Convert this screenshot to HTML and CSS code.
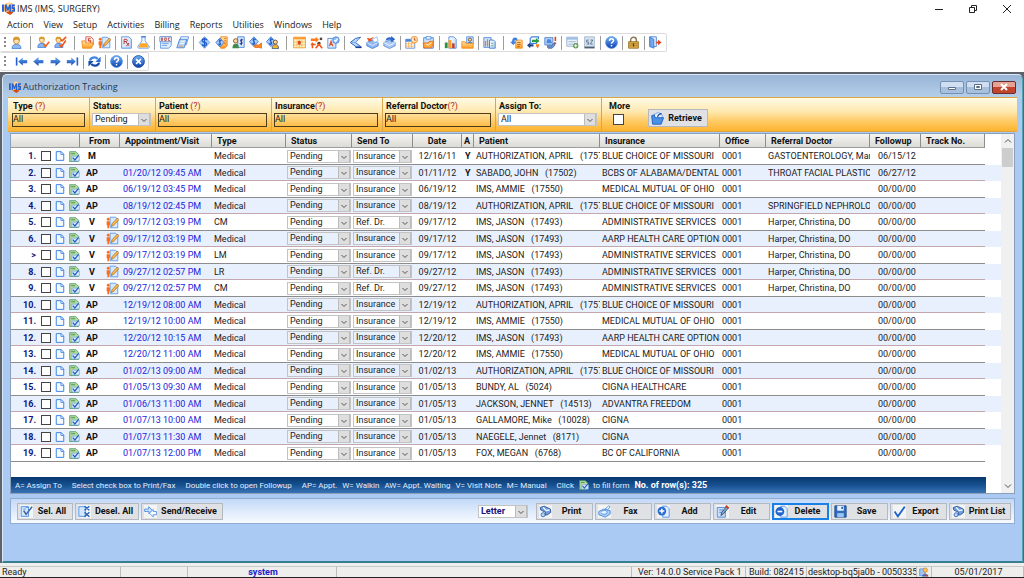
FILE: index.html
```html
<!DOCTYPE html>
<html lang="en">
<head>
<meta charset="utf-8">
<title>IMS (IMS, SURGERY)</title>
<link rel="stylesheet" href="styles.css">
</head>
<body>
<svg class="sprite" aria-hidden="true">
  <defs>
    <linearGradient id="gBlue" x1="0" y1="0" x2="0" y2="1"><stop offset="0" stop-color="#6fb0f5"/><stop offset="1" stop-color="#0d3fae"/></linearGradient>
    <linearGradient id="gPaper" x1="0" y1="0" x2="1" y2="1"><stop offset="0" stop-color="#fff"/><stop offset="1" stop-color="#b9d6f8"/></linearGradient>
    <linearGradient id="gFold" x1="0" y1="0" x2="0" y2="1"><stop offset="0" stop-color="#ffe7a8"/><stop offset="1" stop-color="#ff9a1f"/></linearGradient>
  </defs>
  <symbol id="logo" viewBox="0 0 16 16"><circle cx="9" cy="7.500" r="7" fill="#ffb066"/><circle cx="9" cy="4" r="3" fill="#ffd9a8"/><path d="M5 13l5-2 4 2-4 3z" fill="#d9480f"/><path d="M0 3h2.400v9H0zM3.600 3h2l1.700 4.500L9 3h2v9H9.200V7L8 10.500H6.600L5.400 7v5H3.600zM16 3v2h-2v1.500h2V12h-4v-2h2V8.500h-2V3z" fill="#2463d1"/></symbol>
  <symbol id="person" viewBox="0 0 16 16"><path d="M2.500 15.500c0-4 2.500-5.500 5.500-5.500s5.500 1.500 5.500 5.500z" fill="#8db8f2" stroke="#3d7ad6"/><circle cx="8" cy="6" r="3.600" fill="#ffe0b0" stroke="#c98620"/><path d="M4 6.500C3 1 6 .8 8 .8s5 .2 4 5.700C10.500 4 6 4 4 6.500z" fill="#d9982b"/></symbol>
  <symbol id="personcheck" viewBox="0 0 16 16"><path d="M1 14c0-4 2-5 5-5s5 1 5 5z" fill="#8db8f2" stroke="#3d7ad6"/><circle cx="6" cy="5" r="3" fill="#ffe0b0" stroke="#c98620"/><path d="M2.500 5C2 1 4 .8 6 .8S10 1 9.500 5C8 3 4 3 2.500 5z" fill="#d9982b"/><path d="M8 10l2.500 3L15 7" fill="none" stroke="#f0681c" stroke-width="2"/></symbol>
  <symbol id="personx" viewBox="0 0 16 16"><path d="M1 14c0-4 2-5 5-5s5 1 5 5z" fill="#8db8f2" stroke="#3d7ad6"/><circle cx="5.500" cy="5" r="3" fill="#ffe0b0" stroke="#c98620"/><path d="M2 5C1.500 1 4 .8 5.500 .8S9.500 1 9 5C7.500 3 4 3 2 5z" fill="#d9982b"/><path d="M8 4l2 2 5-5M6.500 10.500l2.500 3 5.500-8" fill="none" stroke="#f0561c" stroke-width="2"/></symbol>
  <symbol id="folder5" viewBox="0 0 16 16"><path d="M6 1h6l3 3v7H6z" fill="#fff" stroke="#d33b22"/><path d="M12 3.500H9v2.500h3v3H9" fill="none" stroke="#d33b22" stroke-width="1.300"/><path d="M1 6h4l1 2.500h9l-2 6.500H2z" fill="url(#gFold)" stroke="#ef8a17"/></symbol>
  <symbol id="note" viewBox="0 0 16 16"><path d="M5 1.500h6.500L14.500 4v10.500H5z" fill="#d9e9fd" stroke="#4e93e6"/><circle cx="2.700" cy="4" r="1.700" fill="#ff6a13"/><path d="M.8 6.500h4v5h-1V15H1.700v-3.500H.8z" fill="#ff6a13"/><path d="M6.500 13l1-3.500L14 2.500l1.800 2-6.500 7z" fill="#ffc04d" stroke="#94540f" stroke-width=".8"/></symbol>
  <symbol id="rx" viewBox="0 0 16 16"><path d="M2 1h9l3 3v11H2z" fill="url(#gPaper)" stroke="#4384de"/><path d="M5 10V4h2.500c2 0 2 2.800 0 2.800H5m2 0L11 12m0-3.500L8 12.500" fill="none" stroke="#b93a3a" stroke-width="1.200"/></symbol>
  <symbol id="flask" viewBox="0 0 16 16"><path d="M6 1h4v5l5 7c.5 1-.2 2-1.500 2h-11C1.200 15 .5 14 1 13l5-7z" fill="#eef6ff" stroke="#5c9ae6"/><path d="M4.500 9h7L14 13.200c0 1-.5 1.100-1 1.100H3c-.5 0-1-.1-1-1.100z" fill="#ffa726"/><path d="M5 1h6" stroke="#3d7ad6" stroke-width="1.500"/></symbol>
  <symbol id="doc" viewBox="0 0 16 16"><path d="M2 1h13v11l-3 3H2z" fill="#e4effd" stroke="#4d8de0"/><path d="M1 1h14v6H1z" fill="#fff" stroke="#5b86c4"/><path d="M3 2.500v3h1.500v-3zM7 2.500h2v3H7zM13.500 2.500h-2v3h2" fill="none" stroke="#b23737"/><path d="M4 9h8M4 11.500h6" stroke="#4d8de0"/></symbol>
  <symbol id="sheets" viewBox="0 0 16 16"><path d="M6 1h9.500l-3 10H3z" fill="#fff" stroke="#4384de"/><path d="M4.500 4h9L10 14.500H1z" fill="#b9d6f8" stroke="#3876d2"/><path d="M6 6.500h5M5 9h5" stroke="#fff"/><path d="M3.500 12.500h5" stroke="#ff7a1a"/></symbol>
  <symbol id="dollar" viewBox="0 0 16 16"><path d="M8 .8L14.500 8 8 15.200 1.500 8z" fill="#a9cdf8" stroke="#5b9bea"/><path d="M11.200 5C9 2.500 4.500 3.500 5.200 6s5.500 1.300 5.500 3.800-4 2.700-6 .7M8 2v12" fill="none" stroke="#1f5cc7" stroke-width="1.600"/></symbol>
  <symbol id="dollardoc" viewBox="0 0 16 16"><path d="M7 1h8v11l-3 3H7z" fill="url(#gFold)" stroke="#ee7e18"/><path d="M11 3h3M11 6h3M11 9h3" stroke="#e06a12"/><path d="M6 2.500L11 8l-5 5.500L1 8z" fill="#a9cdf8" stroke="#2f70cf"/><path d="M8 6c-2-1.800-4 0-2 2s0 3.500-2 1.800M6 4v8" fill="none" stroke="#1f5cc7" stroke-width="1.300"/></symbol>
  <symbol id="dollarperson" viewBox="0 0 16 16"><path d="M7 1h8v13H7z" fill="#dcebff" stroke="#3a78d4"/><circle cx="4.500" cy="6" r="2.700" fill="#ffd79b" stroke="#7c4a1b"/><path d="M.5 15c0-4 1.500-5.500 4-5.500s4 1.500 4 5.500z" fill="#3f8b4d"/><path d="M13.500 5c-2-1.500-4 0-2 2s0 3.500-2 2M11.500 3.500v8" fill="none" stroke="#243c8c" stroke-width="1.300"/></symbol>
  <symbol id="dollarcard" viewBox="0 0 16 16"><path d="M6 1l5.500 6L6 13 .5 7z" fill="#a9cdf8" stroke="#2f70cf"/><path d="M8.500 4.500c-2.500-2-5 0-2.500 2.500s0 4-2.500 2M6 2.500v9" fill="none" stroke="#1f5cc7" stroke-width="1.300"/><path d="M7 11h5l3.500-2.500V15l-3-1H7z" fill="#ff8b21" stroke="#e2631a"/></symbol>
  <symbol id="dollaruser" viewBox="0 0 16 16"><path d="M6 1l5.500 6L6 13 .5 7z" fill="#a9cdf8" stroke="#2f70cf"/><path d="M8.500 4.500c-2.500-2-5 0-2.500 2.500s0 4-2.500 2M6 2.500v9" fill="none" stroke="#1f5cc7" stroke-width="1.300"/><circle cx="11.500" cy="7.500" r="2.500" fill="#ffd79b" stroke="#4c3b1c"/><path d="M7.500 15.500c0-4 2-5 4-5s4 1 4 5z" fill="#f4b12c" stroke="#31537f"/></symbol>
  <symbol id="calendar" viewBox="0 0 16 16"><path d="M.8 1.500h14.500v13H.8z" fill="#fff3c9" stroke="#e8931c"/><path d="M.8 1.500h14.500V4H.8z" fill="#ff9a2c"/><path d="M1 7.500h14M1 11h14M5 4v10.500M11 4v10.500M8 4v10.500" stroke="#f0ae45" stroke-width=".8"/><path d="M6 6h3.500v4.500H6z" fill="#d9481c"/></symbol>
  <symbol id="route" viewBox="0 0 16 16"><path d="M1 3h6V1l4 3.500L7 8V6H1z" fill="#ff7a1a"/><circle cx="11" cy="9" r="2" fill="#4d3320"/><path d="M3 8v7M1 10.500h6M7 15l4-5 4 5" fill="none" stroke="#ef5a17" stroke-width="2"/><path d="M12 2h3v3h-3z" fill="#51453d"/></symbol>
  <symbol id="checkdoc" viewBox="0 0 16 16"><path d="M1 3h10v12H1z" fill="url(#gPaper)" stroke="#4384de"/><path d="M3 12.500l2-6 2 6m-3.500-2h3" fill="none" stroke="#d9481c" stroke-width="1.300"/><circle cx="11" cy="5" r="4" fill="#8fbdf6" stroke="#3a7ad8"/><path d="M9 5l1.500 2L13 3" fill="none" stroke="#fff" stroke-width="1.500"/></symbol>
  <symbol id="scanner" viewBox="0 0 16 16"><path d="M14.500 1.500L8 3 1.500 8 9 13.500h6L8 8z" fill="#b9d6f8" stroke="#2d66c4" stroke-width="1.200"/><path d="M3 8h5l6-6" fill="none" stroke="#6fa5ea"/><path d="M8 14h7.500" stroke="#173f92" stroke-width="1.800"/></symbol>
  <symbol id="inbox" viewBox="0 0 16 16"><path d="M1 8l7-3 7 3v4l-7 3.500L1 12z" fill="#8db8f2" stroke="#3f78cf"/><path d="M1 8l7 3.500L15 8" fill="none" stroke="#e9f3ff"/><path d="M8 4l5.500-3L15 6l-5 2z" fill="#fff" stroke="#8db8f2"/><path d="M1 2l2 4h5L6.500 4.800 10 1 5 3z" fill="#f0561c"/></symbol>
  <symbol id="outbox" viewBox="0 0 16 16"><path d="M1 8l7-3 7 3v4l-7 3.500L1 12z" fill="#a9c9f5" stroke="#5b88cf"/><path d="M1 8l7 3.500L15 8" fill="none" stroke="#fff"/><path d="M3 6c1-4 4-5 7-4V0l5 4-5 4V5c-3-1-5 0-7 1z" fill="#2a65cd"/></symbol>
  <symbol id="calclock" viewBox="0 0 16 16"><path d="M1 4h11v11H1z" fill="#fff" stroke="#4384de"/><path d="M1 4h11v3H1z" fill="#4384de"/><path d="M1 9.500h11M1 12.500h11M4.500 7v8M8 7v8" stroke="#ffac42"/><circle cx="11.500" cy="4.500" r="4" fill="#ffe5b7" stroke="#f0821c"/><path d="M11.500 2v3H14" fill="none" stroke="#a84a12"/></symbol>
  <symbol id="clip" viewBox="0 0 16 16"><path d="M2 2h12v13H2z" fill="#c9dffb" stroke="#4384de"/><path d="M5 .8h6v3H5z" fill="#fff" stroke="#4384de"/><path d="M1.500 8.500h6l1.500-2h5.500l-2.500 8H2.500z" fill="#ffa938" stroke="#ea661b"/><path d="M5 10l3 1 4-3" fill="none" stroke="#fff"/></symbol>
  <symbol id="chart" viewBox="0 0 16 16"><path d="M6 1h6l3 3v11H6z" fill="url(#gPaper)" stroke="#4384de"/><path d="M1 8h3.500v7H1z" fill="#2b9142"/><path d="M5.500 5H9v10H5.500z" fill="#ff9c28"/><path d="M10 9h3v6h-3z" fill="#c43c24"/></symbol>
  <symbol id="folderuser" viewBox="0 0 16 16"><path d="M7 1h8v9H7z" fill="#dcebff" stroke="#4384de"/><circle cx="11" cy="4.500" r="2" fill="#ffd79b" stroke="#5b3c20"/><path d="M7.500 10c0-4 7-4 7 0z" fill="#3d7ad6"/><path d="M1 7h4l1 2h9v6H1z" fill="url(#gFold)" stroke="#ef8a17"/></symbol>
  <symbol id="chartdoc" viewBox="0 0 16 16"><path d="M1 2h9v12H1z" fill="#d2e4fb" stroke="#4384de"/><path d="M3 6v7M5.500 4v9M8 8v5" stroke="#e2812a" stroke-width="1.500"/><path d="M8 5h5l2 2v8H8z" fill="url(#gPaper)" stroke="#2f70cf"/><path d="M10 9h3M10 12h3" stroke="#59a35e"/></symbol>
  <symbol id="docback" viewBox="0 0 16 16"><path d="M7 5h8v10H7z" fill="url(#gFold)" stroke="#ef8a17"/><path d="M9 8h4M9 10.500h4M9 13h3" stroke="#b54c12"/><path d="M9 3C5 0 2.500 3 2.500 7H0l4 4 4-4H5.500c0-2 1-3 3.500-1z" fill="#3e80e2"/></symbol>
  <symbol id="sync" viewBox="0 0 16 16"><path d="M4 9V3l2-2h8v3M4 9h8" fill="none" stroke="#4384de" stroke-width="1.500"/><path d="M6 4.500h5V2.500L15.500 6 11 9.500v-2H6z" fill="#2f9a43"/><path d="M8 10H4V8L0 11.500 4 15v-2h4z" fill="#1d3f8a"/><path d="M11 10h4v2l-2 3.500L11 12z" fill="#ff7a1a"/></symbol>
  <symbol id="monitor" viewBox="0 0 16 16"><path d="M1 2h10v9H1z" fill="#b8d3f6" stroke="#3f78cf"/><path d="M4 4h4l2 5H3z" fill="#4a87de"/><path d="M4 12h5l4-4v4l-3 3H5z" fill="#6d94cf" stroke="#3f66a3"/><path d="M14 1v5M14 8v2" stroke="#d9481c" stroke-width="2"/></symbol>
  <symbol id="listadd" viewBox="0 0 16 16"><path d="M1 1.500h13v11H1z" fill="#eaf3fc" stroke="#8aa4bf"/><path d="M1 1.500h13v3H1z" fill="#9fc0e6"/><path d="M3 7h9M3 10h6" stroke="#91abc4"/><circle cx="12" cy="12" r="3.300" fill="#5b9a54"/><path d="M10 12h4M12 10v4" stroke="#fff" stroke-width="1.200"/></symbol>
  <symbol id="sz" viewBox="0 0 16 16"><path d="M2 1h12v14H2z" fill="#d6e3f0" stroke="#9fb2c5"/><path d="M7 5H4.500v2.500H7V10H4.500M9 5h3l-3 5h3" fill="none" stroke="#506781"/><path d="M2 13h12v2H2z" fill="#51606f"/></symbol>
  <symbol id="help" viewBox="0 0 16 16"><circle cx="8" cy="8" r="7.300" fill="url(#gBlue)" stroke="#5d9be8"/><path d="M5.500 6c0-3.500 5-3.500 5-.5 0 2-2.500 2-2.500 4M8 11v2" fill="none" stroke="#fff" stroke-width="1.800"/></symbol>
  <symbol id="lock" viewBox="0 0 16 16"><path d="M4.500 8V5c0-4.500 7-4.500 7 0v3" fill="none" stroke="#8a7a52" stroke-width="1.800"/><path d="M2 7h12v8H2z" fill="#e0b04a" stroke="#8d681e"/><path d="M3 9.500h10M3 12h10" stroke="#a67c24"/><path d="M8 9v4" stroke="#5d4313" stroke-width="1.500"/></symbol>
  <symbol id="exit" viewBox="0 0 16 16"><path d="M1 1h8v12H1z" fill="#eef5ff" stroke="#3876d2"/><path d="M1 1l5 3v11l-5-2z" fill="#74a8ee" stroke="#3876d2"/><path d="M8.500 7H11V4.500L15.500 8 11 11.500V9H8.500z" fill="#e8451c"/></symbol>
  <symbol id="first" viewBox="0 0 16 16"><path d="M2 3v10" stroke="#2560cf" stroke-width="2"/><path d="M4 8l5.500-5v3H15v4H9.500v3z" fill="url(#gBlue)"/></symbol>
  <symbol id="prev" viewBox="0 0 16 16"><path d="M1.500 8L8 2.500V6h6v4H8v3.500z" fill="url(#gBlue)"/></symbol>
  <symbol id="next" viewBox="0 0 16 16"><path d="M14.500 8L8 2.500V6H2v4h6v3.500z" fill="url(#gBlue)"/></symbol>
  <symbol id="last" viewBox="0 0 16 16"><path d="M14 3v10" stroke="#2560cf" stroke-width="2"/><path d="M12 8L6.500 3v3H1v4h5.500v3z" fill="url(#gBlue)"/></symbol>
  <symbol id="refresh" viewBox="0 0 16 16"><path d="M2.500 7C3 3 9 1.500 12 5" fill="none" stroke="#3f86e4" stroke-width="2.800"/><path d="M15.500 2v6.500H9z" fill="#2a6fd6"/><path d="M13.500 9.500C13 13.500 7 14.500 4 11" fill="none" stroke="#164aa8" stroke-width="2.800"/><path d="M.5 14V7.500H7z" fill="#164aa8"/></symbol>
  <symbol id="closeball" viewBox="0 0 16 16"><circle cx="8" cy="8" r="7.300" fill="url(#gBlue)" stroke="#174a9c"/><path d="M5 5l6 6M11 5l-6 6" stroke="#fff" stroke-width="2"/></symbol>
  <symbol id="page" viewBox="0 0 16 16"><path d="M2 1h8l4 4v10H2z" fill="#f5faff" stroke="#3f86e4" stroke-width="1.600"/><path d="M9.500 1v4.500H14" fill="none" stroke="#3f86e4" stroke-width="1.400"/></symbol>
  <symbol id="form" viewBox="0 0 16 16"><path d="M1 1h9l4 4v10.300H1z" fill="#b5dba0" stroke="#4f9868" stroke-width="1.200"/><path d="M3 4h6" stroke="#428a4c" stroke-width="1.300"/><path d="M4 7.500h11v7H4z" fill="#dceafe" stroke="#79a7da"/><path d="M5.500 9.500L8.500 13l5.500-6.500" fill="none" stroke="#1e5fc2" stroke-width="1.800"/></symbol>
  <symbol id="open" viewBox="0 0 16 16"><path d="M4 3l5-2.500L14 4l-1 5H5z" fill="#eaf3ff" stroke="#5b9bea"/><path d="M.8 4.500L4 3.500 5 7h10.500l-3 8H2z" fill="#4892ea" stroke="#1d58b8"/><path d="M8 6c1-3 3-4 5-4" fill="none" stroke="#174aa2" stroke-width="1.400"/></symbol>
  <symbol id="selall" viewBox="0 0 16 16"><path d="M1.500 2h9v12h-9z" fill="#d5e7fc" stroke="#3f86e4"/><path d="M4.500 7l3 4.500L15 2" fill="none" stroke="#3b5f8e" stroke-width="1.800"/><path d="M7 3h3M4 5h3M9 9l3-2" stroke="#3f86e4"/></symbol>
  <symbol id="deselall" viewBox="0 0 16 16"><path d="M1 2h8v12H1z" fill="#d5e7fc" stroke="#3f86e4"/><path d="M8 1.500l6 5M14 1.500l-6 5M8 9l6 5.500M14 9l-6 5.500" stroke="#2362b5" stroke-width="1.700"/></symbol>
  <symbol id="swap" viewBox="0 0 16 16"><path d="M.8 5h5V2l4.500 4.500L6 11V8H.8z" fill="#cfe3fb" stroke="#3f86e4"/><path d="M15.300 8h-4V5.500L6.500 10l4.800 4.500V12h4z" fill="#fff" stroke="#3f86e4"/></symbol>
  <symbol id="print" viewBox="0 0 16 16"><path d="M1.500 3l5-1.500L14 5l.5 4-4 3-3 .5L8 9 2 6z" fill="#6fa0e2" stroke="#23488c"/><path d="M5 3l4 4 4-1" fill="none" stroke="#fff" stroke-width="1.500"/><circle cx="5" cy="12" r="2.500" fill="#b9d6f8" stroke="#2e5fae"/></symbol>
  <symbol id="fax" viewBox="0 0 16 16"><path d="M1 8l6-3 8 2v4l-6 4-8-3z" fill="#a9cdf7" stroke="#4384de"/><path d="M4 8c3-2 7-2 7 1s-5 3-7 1" fill="#e9f4ff" stroke="#4384de"/><path d="M9 5l4-4 2 1-3 4z" fill="#fff" stroke="#4384de"/></symbol>
  <symbol id="add" viewBox="0 0 16 16"><path d="M7 1.500h5l3 3V15H7z" fill="#e4f0ff" stroke="#3f86e4"/><circle cx="6" cy="7.500" r="5.300" fill="#2a6bd0"/><path d="M3 7.500h6M6 4.500v6" stroke="#fff" stroke-width="1.800"/></symbol>
  <symbol id="edit" viewBox="0 0 16 16"><path d="M1.500 3h10v12h-10z" fill="#c9dffb" stroke="#3f78cf"/><path d="M4 6h5M4 9h4" stroke="#3f78cf"/><path d="M6 13l1-4 6-7 2 2-6 7z" fill="#7fa5c7" stroke="#2c4666"/><path d="M12 1l3.500 3" stroke="#cf3e22" stroke-width="2.500"/></symbol>
  <symbol id="delete" viewBox="0 0 16 16"><path d="M7 1.500h5l3 3V15H7z" fill="#e4f0ff" stroke="#3f86e4"/><circle cx="6" cy="8" r="5.400" fill="#1f63cd"/><path d="M3 8h6" stroke="#fff" stroke-width="2"/></symbol>
  <symbol id="save" viewBox="0 0 16 16"><path d="M1 1h14v14H1z" fill="#2f6cc0" stroke="#163d7d"/><path d="M4 1h8v6H4z" fill="#e8f2ff"/><path d="M4 10h8v5H4z" fill="#9cc4f2"/><path d="M9 2h2v3H9z" fill="#245cae"/></symbol>
  <symbol id="export" viewBox="0 0 16 16"><path d="M2 8l4 6L14.500 2" fill="none" stroke="#1d62c9" stroke-width="2.200"/></symbol>
  <symbol id="dbuser" viewBox="0 0 16 16"><path d="M1 3h9v11H1z" fill="#9cc4f2" stroke="#4384de"/><circle cx="10" cy="5" r="3.500" fill="#ffc25b" stroke="#c0771b"/><path d="M5 15c0-5 10-5 10 0z" fill="#2a6bd0"/><path d="M9 11l4 4" stroke="#e8451c" stroke-width="2"/></symbol>
</svg>

<header class="titlebar">
  <svg class="app-logo"><use href="#logo"/></svg>
  <h1 class="app-name">IMS (IMS, SURGERY)</h1>
  <div class="win-controls">
    <button type="button" class="win-btn" aria-label="Minimize"><svg viewBox="0 0 10 10"><path d="M1 5.500h8"/></svg></button>
    <button type="button" class="win-btn" aria-label="Restore"><svg viewBox="0 0 10 10"><path d="M1.500 3.500h5v5h-5zM3.500 3.500v-2h5v5h-2"/></svg></button>
    <button type="button" class="win-btn" aria-label="Close"><svg viewBox="0 0 10 10"><path d="M1 1l8 8M9 1L1 9"/></svg></button>
  </div>
</header>

<nav class="menu" aria-label="Main menu">
  <button type="button">Action</button><button type="button">View</button><button type="button">Setup</button><button type="button">Activities</button><button type="button">Billing</button><button type="button">Reports</button><button type="button">Utilities</button><button type="button">Windows</button><button type="button">Help</button>
</nav>

<div class="toolbar toolbar-main" id="mainTools" role="toolbar" aria-label="Modules"></div>
<div class="toolbar toolbar-nav" id="navTools" role="toolbar" aria-label="Navigation"></div>

<main class="mdi">
  <section class="child" aria-labelledby="childTitle">
    <div class="child-title">
      <svg class="child-logo"><use href="#logo"/></svg>
      <h2 id="childTitle">Authorization Tracking</h2>
      <div class="child-controls">
        <button type="button" class="child-btn" aria-label="Minimize window"><svg viewBox="0 0 12 8"><path d="M2.500 4.500h7v2h-7z"/></svg></button>
        <button type="button" class="child-btn" aria-label="Maximize window"><svg viewBox="0 0 12 8"><path d="M2.500 1.500h7v5h-7zM4.500 3.500h3v1h-3z"/></svg></button>
        <button type="button" class="child-btn child-btn-close" aria-label="Close window"><svg viewBox="0 0 12 8"><path d="M3 1l6 6M9 1L3 7"/></svg></button>
      </div>
    </div>

    <form class="filters">
      <div class="filter f-type"><label for="fType">Type <span class="hint">(?)</span></label><input id="fType" class="lookup" value="All"></div>
      <div class="filter f-status"><label for="fStatus">Status:</label><select id="fStatus" class="combo"><option>Pending</option></select></div>
      <div class="filter f-patient"><label for="fPatient">Patient <span class="hint">(?)</span></label><input id="fPatient" class="lookup" value="All"></div>
      <div class="filter f-insurance"><label for="fIns">Insurance<span class="hint">(?)</span></label><input id="fIns" class="lookup" value="All"></div>
      <div class="filter f-doctor"><label for="fDoc">Referral Doctor<span class="hint">(?)</span></label><input id="fDoc" class="lookup" value="All"></div>
      <div class="filter f-assign"><label for="fAssign">Assign To:</label><select id="fAssign" class="combo"><option>All</option></select></div>
      <div class="filter f-more"><label for="fMore">More</label><input id="fMore" class="tick" type="checkbox"></div>
      <button type="button" class="btn btn-retrieve"><svg class="icon"><use href="#open"/></svg><span>Retrieve</span></button>
    </form>

    <div class="grid-panel">
      <div class="grid-main">
        <table class="grid">
          <colgroup><col class="c-lead"><col class="c-from"><col class="c-appt"><col class="c-type"><col class="c-status"><col class="c-send"><col class="c-date"><col class="c-a"><col class="c-patient"><col class="c-ins"><col class="c-office"><col class="c-doc"><col class="c-follow"><col class="c-track"><col></colgroup>
          <thead><tr><th></th><th class="mid">From</th><th>Appointment/Visit</th><th>Type</th><th>Status</th><th>Send To</th><th class="mid">Date</th><th class="tight">A</th><th>Patient</th><th>Insurance</th><th>Office</th><th>Referral Doctor</th><th>Followup</th><th>Track No.</th><td class="rest"></td></tr></thead>
          <tbody id="rows"></tbody>
        </table>
        <p class="legend"><span class="g1">A= Assign To</span><span class="g2">Select check box to Print/Fax</span><span class="g2">Double click to open Followup</span><span class="g3">AP= Appt.</span><span class="g3">W= Walkin</span><span class="g3">AW= Appt. Waiting</span><span class="g3">V= Visit Note</span><span class="g2">M= Manual</span><span class="g3">Click</span><svg class="legend-icon"><use href="#form"/></svg><span class="g3">to fill form</span><strong>No. of row(s): 325</strong></p>
      </div>
      <div class="scroll" aria-hidden="true"><svg class="arrow" viewBox="0 0 8 8"><path d="M1 5.500L4 2.500l3 3"/></svg><span class="thumb"></span><svg class="arrow arrow-down" viewBox="0 0 8 8"><path d="M1 2.500l3 3 3-3"/></svg></div>
    </div>

    <div class="actions">
      <button type="button" class="btn w-sel"><svg class="icon"><use href="#selall"/></svg><span>Sel. All</span></button>
      <button type="button" class="btn w-desel"><svg class="icon"><use href="#deselall"/></svg><span>Desel. All</span></button>
      <button type="button" class="btn w-send"><svg class="icon"><use href="#swap"/></svg><span>Send/Receive</span></button>
      <select class="combo paper" aria-label="Paper size"><option>Letter</option></select>
      <button type="button" class="btn"><svg class="icon"><use href="#print"/></svg><span>Print</span></button>
      <button type="button" class="btn"><svg class="icon"><use href="#fax"/></svg><span>Fax</span></button>
      <button type="button" class="btn"><svg class="icon"><use href="#add"/></svg><span>Add</span></button>
      <button type="button" class="btn"><svg class="icon"><use href="#edit"/></svg><span>Edit</span></button>
      <button type="button" class="btn btn-focus"><svg class="icon"><use href="#delete"/></svg><span>Delete</span></button>
      <button type="button" class="btn"><svg class="icon"><use href="#save"/></svg><span>Save</span></button>
      <button type="button" class="btn"><svg class="icon"><use href="#export"/></svg><span>Export</span></button>
      <button type="button" class="btn w-list"><svg class="icon"><use href="#print"/></svg><span>Print List</span></button>
    </div>
  </section>
</main>

<footer class="status">
  <span class="s-ready">Ready</span><span class="s-gap"></span><span class="s-user">system</span><span class="s-fill"></span><span class="s-ver">Ver: 14.0.0 Service Pack 1</span><span class="s-build">Build: 082415</span><span class="s-host">desktop-bq5ja0b - 0050335</span><span class="s-icon"><svg><use href="#dbuser"/></svg></span><span class="s-date">05/01/2017</span>
</footer>
<script src="app.js"></script>
</body>
</html>
```
FILE: styles.css
```css
* { box-sizing: border-box; }

body {
  margin: 0;
  height: 100vh;
  display: flex;
  flex-direction: column;
  overflow: hidden;
  background: #fff;
  color: #222;
  font-family: Roboto, "Liberation Sans", sans-serif;
  font-size: 9px;
}

button, input, select { font: inherit; color: inherit; margin: 0; }
h1, h2, p { margin: 0; font-weight: normal; }
.sprite { position: absolute; width: 0; height: 0; }

/* Application title and menu */
.titlebar { display: flex; align-items: center; height: 17px; padding-left: 2px; flex: none; }
.app-logo { width: 13px; height: 13px; }
.app-name { margin-left: 2px; font: 9px/12px "Open Sans", "Noto Sans", sans-serif; }
.win-controls { display: flex; margin-left: auto; }
.win-btn { width: 34px; height: 16px; padding: 0; border: 0; background: none; display: grid; place-items: center; }
.win-btn svg { width: 10px; height: 10px; fill: none; stroke: #222; }
.menu { display: flex; gap: 10px; padding-left: 7px; height: 16px; flex: none; }
.menu button { padding: 0; border: 0; background: none; font: 9px/14px "Open Sans", "Noto Sans", sans-serif; }

/* Toolbars */
.toolbar { display: flex; align-items: center; gap: 4px; flex: none; align-self: flex-start; height: 19px; padding: 0 4px 0 4px; border: 1px solid #dcdcdc; border-left: 0; border-radius: 2px; background: #fff; }
.toolbar-nav { margin-bottom: 1px; padding-right: 3px; }
.grip { width: 2px; height: 12px; background: repeating-linear-gradient(#8a8a8a 0 2px, transparent 2px 4px); }
.toolbar-nav .grip { margin-right: 5px; }
.tool { width: 13px; height: 13px; padding: 0; border: 0; background: none; display: block; }
.tool svg { width: 13px; height: 13px; display: block; }
.sep { width: 1px; height: 14px; background: #9d9d9d; }
.sep-wide { margin: 0 2px 0 3px; }

/* Child window */
.mdi { flex: 1; min-height: 0; display: flex; padding: 2px 1px 0 2px; background: #5e636b; }
.child {
  flex: 1; min-width: 0; display: flex; flex-direction: column;
  padding: 0 8px; border-radius: 5px 5px 0 0;
  background: linear-gradient(#99b5d7, #b4cee9 22px, #abcaf3 24px);
  border: 1px solid #d8e8f8; border-right-color: #4fa3b2; border-bottom: 2px solid #367f91;
}
.child-title { display: flex; align-items: center; height: 22px; padding-top: 2px; flex: none; }
.child-logo { width: 12px; height: 12px; margin-left: -2px; }
.child-title h2 { margin-left: 2px; font: 9px/12px "Open Sans", "Noto Sans", sans-serif; color: #26364b; }
.child-controls { display: flex; gap: 2px; margin: 0 -2px 0 auto; }
.child-btn { width: 24px; height: 13px; padding: 0; border: 1px solid #7690b2; border-radius: 2px; background: linear-gradient(#cfdef0 50%, #a7c0de 50%); display: grid; place-items: center; }
.child-btn svg { width: 12px; height: 8px; fill: #fff; stroke: #5d6e84; }
.child-btn-close { border-color: #6b2d2b; background: linear-gradient(#e5a393 50%, #c1442d 50%); }
.child-btn-close svg { stroke: #fff; stroke-width: 2; }

/* Filters */
.filters { display: flex; flex: none; height: 35px; margin: 0 -3px; border: 1px solid #dca541; border-width: 1px 0; background: linear-gradient(#fffbe6, #ffe9b0 40%, #ffcb66 70%, #fdb32f); }
.filter { display: flex; flex-direction: column; padding: 1px 4px 0 2px; border-right: 1px solid #d9a650; }
.filter label { font: bold 9px/14px Roboto, sans-serif; color: #111; padding-left: 1px; white-space: nowrap; }
.hint { color: #b52b1b; font-weight: normal; }
.f-type { width: 82px; padding-left: 4px; }
.f-status { width: 66px; }
.f-patient { width: 116px; }
.f-insurance { width: 111px; }
.f-doctor { width: 113px; }
.f-assign { width: 106px; }
.f-more { width: 42px; border: 0; padding-left: 6px; }
.lookup { width: 100%; height: 14px; padding: 0 0 2px; border: 1px solid #4b3c1b; border-radius: 0; background: linear-gradient(#ffdf9a, #fdbc48); outline: none; }
.combo, .cell-combo {
  appearance: none; width: 100%; height: 13px; padding: 0 15px 0 2px; border: 1px solid #c3c3c3; border-radius: 0; outline: none;
  background: #fff url("data:image/svg+xml,%3Csvg xmlns='http://www.w3.org/2000/svg' width='12' height='11'%3E%3Cpath d='M0 0h12v11H0z' fill='%23dedede'/%3E%3Cpath d='M.5 0v11M11.5 0v11' stroke='%23bcbcbc'/%3E%3Cpath d='M3.500 5l2.500 2.500L8.500 5' fill='none' stroke='%23555'/%3E%3C/svg%3E") no-repeat right center;
  line-height: 11px;
}
.tick { appearance: none; width: 10px; height: 10px; border: 1px solid #444; background: #fff; display: block; }
.f-more .tick { width: 11px; height: 11px; margin: 1px 0 0 5px; }

/* Push buttons */
.btn { display: flex; align-items: center; width: 57px; height: 17px; padding: 0 1px 0 2px; border: 1px solid #b4b9c0; background: #dfe1e5; font: bold 9px/13px Roboto, sans-serif; color: #111; white-space: nowrap; }
.btn span { flex: 1; text-align: center; }
.icon { width: 13px; height: 13px; flex: none; background: #f3f5f4; }
.btn-retrieve { width: 60px; height: 18px; margin: 11px 0 0 4px; }
.btn-retrieve .icon { background: none; }
.btn-focus { border: 2px solid #1a80e5; padding: 0 0 0 1px; }

/* Grid */
.grid-panel { flex: none; display: flex; margin: 1px -1px 0; border: 1px solid #8a9fb9; background: #fff; }
.grid-main { flex: 1; min-width: 0; display: flex; flex-direction: column; }
.grid { width: 100%; table-layout: fixed; border-collapse: separate; border-spacing: 0; }
.c-lead { width: 69px; } .c-from { width: 40px; } .c-appt { width: 92px; } .c-type { width: 74px; }
.c-status { width: 66px; } .c-send { width: 61px; } .c-date { width: 49px; } .c-a { width: 12px; }
.c-patient { width: 126px; } .c-ins { width: 120px; } .c-office { width: 46px; } .c-doc { width: 104px; }
.c-follow { width: 51px; } .c-track { width: 64px; }
.grid th { height: 14px; padding: 0 0 0 5px; text-align: left; font: bold 9px/12px Roboto, sans-serif; color: #111; white-space: nowrap; overflow: hidden; background: linear-gradient(#f4f4f1, #dcdbd6); border-right: 1px solid #8d8d8d; border-bottom: 1px solid #9d9d9d; }
.grid th.mid { text-align: center; padding: 0; }
.grid th.tight { padding-left: 2px; }
.grid tbody td { padding: 0 0 0 2px; border-bottom: 1px solid #c3a6ae; white-space: nowrap; overflow: hidden; line-height: 14px; vertical-align: middle; }
.grid tbody tr { height: 16px; }
.grid tbody tr:nth-child(odd) { height: 17px; }
.grid tbody tr:nth-child(odd) td { border-bottom-color: #8c8c8c; }
.grid tbody tr:nth-child(even) { background: #e8f0fe; }
.grid tbody tr td.rest { border-bottom: 0; }
.lead { display: flex; align-items: center; gap: 4px; }
.lead .num { width: 24px; text-align: right; font: bold 9px/14px Roboto, sans-serif; color: #14147c; }
.lead .tick { flex: none; margin-left: 1px; }
.lead svg { width: 10px; height: 12px; flex: none; }
.lead .form-icon { width: 11px; height: 13px; }
.from { display: flex; align-items: center; justify-content: space-between; font: bold 9px/14px Roboto, sans-serif; color: #111; }
.from span { width: 20px; text-align: center; }
.from svg { width: 13px; height: 13px; margin-right: 1px; }
.grid .appt { color: #2222d8; padding-left: 3px; }
.grid .date { text-align: center; padding: 0; }
.grid .flag { font-weight: bold; color: #111; padding-left: 3px; }
.grid .pad { padding-left: 8px; }
.grid td.combo-cell { padding: 0 1px; }
.cell-combo { display: block; background-color: transparent; padding-right: 12px; height: 13px; }
.legend { display: flex; align-items: center; height: 16px; margin: 15px 15px 0 0; padding-left: 4px; white-space: pre; font: 8px/15px Roboto, sans-serif; color: #e4eefb; background: linear-gradient(#07386f, #16508f 50%, #3b73b5); }
.g1, .g2 { margin-right: 10px; }
.g3 { margin-right: 5px; }
.legend-icon { width: 10px; height: 10px; margin-right: 4px; }
.legend strong { color: #fff; font-size: 9px; }
.scroll { width: 13px; display: flex; flex-direction: column; align-items: center; background: #f0f0f0; }
.arrow { width: 8px; height: 14px; fill: none; stroke: #505050; flex: none; }
.arrow-down { margin-top: auto; }
.thumb { width: 11px; height: 19px; background: #cdcdcd; }

/* Action bar */
.actions { display: flex; align-items: center; gap: 2px; flex: none; height: 26px; margin: 4px -1px 0; padding: 0 3px 0 6px; border: 1px solid #8fadd3; background: linear-gradient(#c3d9f7, #f8fbff); }
.w-sel { width: 56px; } .w-desel { width: 64px; } .w-send { width: 82px; } .w-list { width: 62px; }
.paper { width: 50px; margin: 0 6px 0 auto; font: bold 9px/11px Roboto, sans-serif; color: #14147c; }

/* Status bar */
.status { display: flex; flex: none; height: 15px; padding-top: 3px; background: #eeeeec; border-bottom: 1px solid #222; font: 9px/10px Roboto, sans-serif; }
.status span { border-right: 1px solid #bdbdbd; border-top: 1px solid #c9c9c9; padding-left: 2px; white-space: nowrap; overflow: hidden; }
.status .s-ready { width: 121px; } .status .s-gap { width: 67px; }
.status .s-user { width: 149px; text-align: center; font-weight: bold; color: #2020cc; }
.status .s-fill { flex: 1; }
.status .s-ver { width: 114px; padding-left: 6px; } .status .s-build { width: 61px; padding-left: 3px; }
.status .s-host { width: 110px; padding-left: 1px; } .status .s-icon { width: 15px; padding-left: 1px; }
.s-icon svg { width: 12px; height: 10px; display: block; }
.status .s-date { width: 92px; text-align: center; }
```
FILE: app.js
```js
// Toolbar layout: "|" is a separator, "||" a separator with extra room.
const MAIN = "person || personcheck personx || folder5 note | rx flask | doc sheets | dollar dollardoc dollarperson dollarcard dollaruser || calendar route checkdoc | scanner inbox outbox | calclock clip | chart folderuser | chartdoc || docback sync monitor | listadd sz | help | lock | exit";
const NAV = "first prev next last | refresh | help | closeball";

function fillToolbar(id, spec) {
  const items = spec.split(" ").map(s => {
    if (s === "|") return '<span class="sep"></span>';
    if (s === "||") return '<span class="sep sep-wide"></span>';
    return `<button type="button" class="tool" aria-label="${s}"><svg><use href="#${s}"/></svg></button>`;
  });
  document.getElementById(id).innerHTML = '<span class="grip"></span>' + items.join("");
}
fillToolbar("mainTools", MAIN);
fillToolbar("navTools", NAV);

// number, from, appointment, type, send to, date, A, patient, insurance, referral doctor, followup
const BLUE = "BLUE CHOICE OF MISSOURI", MUT = "MEDICAL MUTUAL OF OHIO", ADM = "ADMINISTRATIVE SERVICES", AARP = "AARP HEALTH CARE OPTIONS";
const APRIL = "AUTHORIZATION, APRIL   (1757", AMMIE = "IMS, AMMIE   (17550)", JASON = "IMS, JASON   (17493)", HARPER = "Harper, Christina, DO";
const ROWS = [
  ["1.", "M", "", "Medical", "Insurance", "12/16/11", "Y", APRIL, BLUE, "GASTOENTEROLOGY, Mar", "06/15/12"],
  ["2.", "AP", "01/20/12 09:45 AM", "Medical", "Insurance", "01/11/12", "Y", "SABADO, JOHN   (17502)", "BCBS OF ALABAMA/DENTAL", "THROAT FACIAL PLASTIC", "06/27/12"],
  ["3.", "AP", "06/19/12 03:45 PM", "Medical", "Insurance", "06/19/12", "", AMMIE, MUT, "", ""],
  ["4.", "AP", "08/19/12 02:45 PM", "Medical", "Insurance", "08/19/12", "", APRIL, BLUE, "SPRINGFIELD NEPHROLO", ""],
  ["5.", "V", "09/17/12 03:19 PM", "CM", "Ref. Dr.", "09/17/12", "", JASON, ADM, HARPER, ""],
  ["6.", "V", "09/17/12 03:19 PM", "Medical", "Insurance", "09/17/12", "", JASON, AARP, HARPER, ""],
  [">", "V", "09/17/12 03:19 PM", "LM", "Insurance", "09/17/12", "", JASON, ADM, HARPER, ""],
  ["8.", "V", "09/27/12 02:57 PM", "LR", "Ref. Dr.", "09/27/12", "", JASON, ADM, HARPER, ""],
  ["9.", "V", "09/27/12 02:57 PM", "CM", "Ref. Dr.", "09/27/12", "", JASON, ADM, HARPER, ""],
  ["10.", "AP", "12/19/12 08:00 AM", "Medical", "Insurance", "12/19/12", "", APRIL, BLUE, "", ""],
  ["11.", "AP", "12/19/12 10:00 AM", "Medical", "Insurance", "12/19/12", "", AMMIE, MUT, "", ""],
  ["12.", "AP", "12/20/12 10:15 AM", "Medical", "Insurance", "12/20/12", "", JASON, AARP, "", ""],
  ["13.", "AP", "12/20/12 11:00 AM", "Medical", "Insurance", "12/20/12", "", AMMIE, MUT, "", ""],
  ["14.", "AP", "01/02/13 09:00 AM", "Medical", "Insurance", "01/02/13", "", APRIL, BLUE, "", ""],
  ["15.", "AP", "01/05/13 09:30 AM", "Medical", "Insurance", "01/05/13", "", "BUNDY, AL   (5024)", "CIGNA HEALTHCARE", "", ""],
  ["16.", "AP", "01/06/13 11:00 AM", "Medical", "Insurance", "01/05/13", "", "JACKSON, JENNET   (14513)", "ADVANTRA FREEDOM", "", ""],
  ["17.", "AP", "01/07/13 10:00 AM", "Medical", "Insurance", "01/05/13", "", "GALLAMORE, Mike   (10028)", "CIGNA", "", ""],
  ["18.", "AP", "01/07/13 11:30 AM", "Medical", "Insurance", "01/05/13", "", "NAEGELE, Jennet   (8171)", "CIGNA", "", ""],
  ["19.", "AP", "01/07/13 12:00 PM", "Medical", "Insurance", "01/05/13", "", "FOX, MEGAN   (6768)", "BC OF CALIFORNIA", "", ""]
];

document.getElementById("rows").innerHTML = ROWS.map(([n, from, appt, type, send, date, flag, pat, ins, doc, follow]) => `
<tr>
  <td><div class="lead"><span class="num">${n.replace(">", "&gt;")}</span><input type="checkbox" class="tick" aria-label="Select ${pat.trim()}"><svg><use href="#page"/></svg><svg class="form-icon"><use href="#form"/></svg></div></td>
  <td><div class="from"><span>${from}</span>${from === "V" ? '<svg><use href="#note"/></svg>' : ""}</div></td>
  <td class="appt">${appt}</td>
  <td>${type}</td>
  <td class="combo-cell"><select class="cell-combo" aria-label="Status"><option>Pending</option></select></td>
  <td class="combo-cell"><select class="cell-combo" aria-label="Send to"><option>${send}</option></select></td>
  <td class="date">${date}</td>
  <td class="flag">${flag}</td>
  <td>${pat.replace(/   /g, " &nbsp; ")}</td>
  <td>${ins}</td>
  <td>0001</td>
  <td>${doc}</td>
  <td class="pad">${follow || "00/00/00"}</td>
  <td></td>
  <td class="rest"></td>
</tr>`).join("");
```
